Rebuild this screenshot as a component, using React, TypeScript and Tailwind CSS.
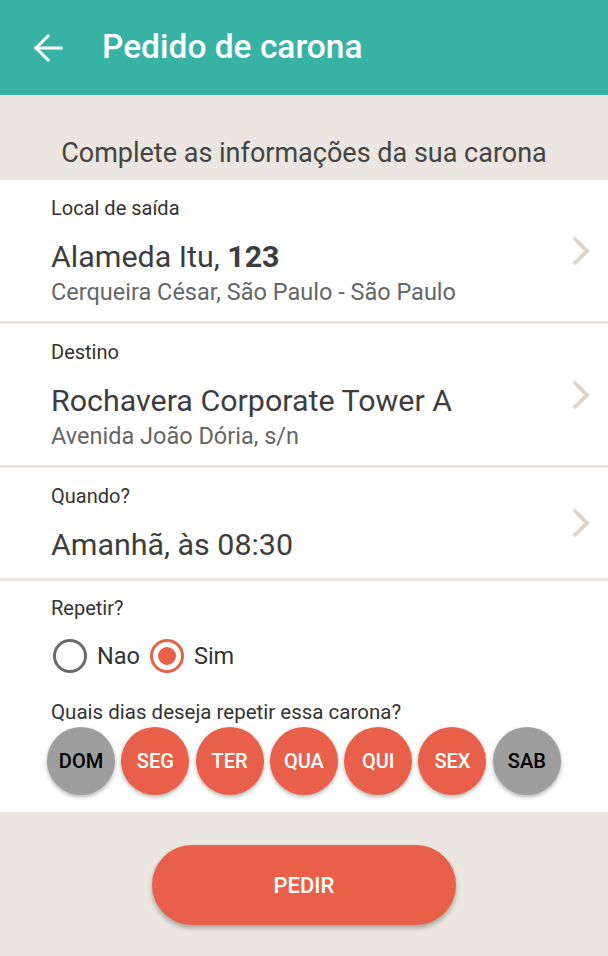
type Place = {
  label: string;
  main: React.ReactNode;
  sub?: string;
};

const places: Place[] = [
  {
    label: "Local de saída",
    main: (
      <>
        Alameda Itu, <span className="font-bold">123</span>
      </>
    ),
    sub: "Cerqueira César, São Paulo - São Paulo",
  },
  {
    label: "Destino",
    main: "Rochavera Corporate Tower A",
    sub: "Avenida João Dória, s/n",
  },
  { label: "Quando?", main: "Amanhã, às 08:30" },
];

const days = [
  { name: "DOM", on: false },
  { name: "SEG", on: true },
  { name: "TER", on: true },
  { name: "QUA", on: true },
  { name: "QUI", on: true },
  { name: "SEX", on: true },
  { name: "SAB", on: false },
];

const Chevron = () => (
  <svg width="20" height="30" viewBox="0 0 20 30" fill="none" stroke="#dcd5cd" strokeWidth="4">
    <path d="M3 2L16 15L3 28" />
  </svg>
);

const Row = ({ item }: { item: Place }) => {
  return (
    <div className="flex items-center bg-white pl-[51px] pr-[17px] border-b-[3px] border-[#e9e3dc]">
      <div className={item.sub ? "flex-1 pt-[16px] pb-[13px]" : "flex-1 pt-[16px] pb-[15px]"}>
        <p className="text-[20px] leading-[24px] text-[#333]">{item.label}</p>
        <p className="mt-[19px] text-[30.4px] leading-[36px] text-[#3d3d3d]">{item.main}</p>
        {item.sub && (
          <p className="mt-[1px] text-[23.5px] leading-[32px] text-[#666]">{item.sub}</p>
        )}
      </div>
      <Chevron />
    </div>
  );
};

const Radio = ({ label, checked }: { label: string; checked?: boolean }) => {
  return (
    <div className="flex items-center gap-[10px]">
      <div
        className={
          checked
            ? "w-[34px] h-[34px] rounded-full border-[3px] border-[#e8604a] flex items-center justify-center"
            : "w-[34px] h-[34px] rounded-full border-[3px] border-[#6b6b6b]"
        }
      >
        {checked && <div className="w-[18px] h-[18px] rounded-full bg-[#e8604a]" />}
      </div>
      <span className="text-[23.5px] leading-[34px] text-[#333]">{label}</span>
    </div>
  );
};

export default function App() {
  return (
    <div className="w-[608px] h-[956px] bg-[#ebe6df] flex flex-col font-['Roboto',sans-serif]">
      <header className="h-[95px] shrink-0 bg-[#38b2a5] flex items-center pl-[33px]">
        <svg width="30" height="30" viewBox="0 0 30 30" fill="none" stroke="white" strokeWidth="3" strokeLinecap="square">
          <path d="M3 15H28" />
          <path d="M15 3L3 15L15 27" />
        </svg>
        <h1 className="ml-[39px] text-[33.5px] font-medium text-white">Pedido de carona</h1>
      </header>

      <p className="pt-[42px] pb-[10px] text-center text-[27px] leading-[33px] text-[#444]">
        Complete as informações da sua carona
      </p>

      {places.map((p) => (
        <Row key={p.label} item={p} />
      ))}

      <div className="bg-white pl-[47px] pt-[15px] pb-[17px]">
        <p className="pl-[4px] text-[20px] leading-[24px] text-[#333]">Repetir?</p>
        <div className="mt-[19px] pl-[6px] flex items-center gap-[10px]">
          <Radio label="Nao" />
          <Radio label="Sim" checked />
        </div>
        <p className="mt-[26px] pl-[4px] text-[20.5px] leading-[26px] text-[#333]">
          Quais dias deseja repetir essa carona?
        </p>
        <div className="mt-[2px] flex gap-[6.3px]">
          {days.map((d) => (
            <div
              key={d.name}
              className={
                d.on
                  ? "w-[68px] h-[68px] rounded-full bg-[#e8604a] text-white flex items-center justify-center text-[20px] font-medium shadow-[0_2px_4px_rgba(0,0,0,0.3)]"
                  : "w-[68px] h-[68px] rounded-full bg-[#9e9e9e] text-black flex items-center justify-center text-[20px] font-medium shadow-[0_2px_4px_rgba(0,0,0,0.3)]"
              }
            >
              {d.name}
            </div>
          ))}
        </div>
      </div>

      <div className="flex justify-center pt-[33px]">
        <button className="w-[304px] h-[80px] rounded-full bg-[#e8604a] text-white text-[22px] font-medium shadow-[0_3px_5px_rgba(0,0,0,0.3)]">
          PEDIR
        </button>
      </div>
    </div>
  );
}
